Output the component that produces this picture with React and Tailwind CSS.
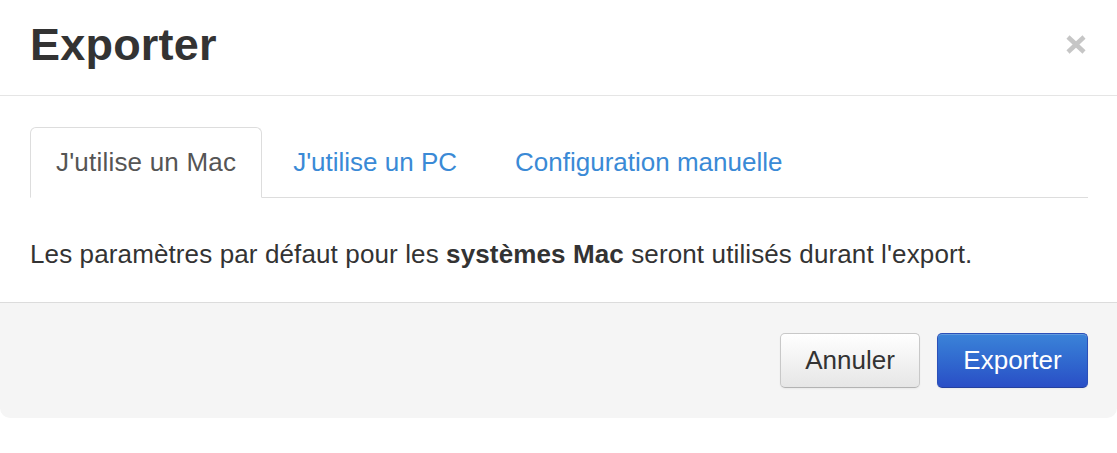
import React from "react";

export default function App() {
  return (
    <div className="w-[1117px] h-[453px] bg-white" style={{ fontFamily: '"Liberation Sans", Arial, sans-serif' }}>
      <div className="w-full rounded-[10px] bg-white">
        {/* Header */}
        <div className="h-[96px] border-b border-[#e5e5e5] pl-[30px] pr-[30px] flex items-start justify-between">
          <h3 className="pt-[22px] text-[45px] leading-[45px] font-bold text-[#333] tracking-[0.2px]">Exporter</h3>
          <button className="mt-[35px] mr-[1px]" aria-label="close">
            <svg width="20" height="19" viewBox="0 0 20 19">
              <line x1="2" y1="2" x2="18" y2="17" stroke="#c6c6c6" strokeWidth="4.5" />
              <line x1="18" y1="2" x2="2" y2="17" stroke="#c6c6c6" strokeWidth="4.5" />
            </svg>
          </button>
        </div>

        {/* Body */}
        <div className="pl-[30px] pr-[29px] pt-[31px] pb-[32px]">
          <ul className="flex border-b border-[#ddd]">
            <li className="-mb-px mr-[4px] h-[71px] flex items-center px-[25px] border border-[#ddd] border-b-white rounded-t-[6px] bg-white text-[26px] tracking-[0.2px] text-[#555]">
              J'utilise un Mac
            </li>
            <li className="-mb-px mr-[4px] h-[71px] flex items-center px-[26px] border border-transparent text-[26px] text-[#3a8ad6]">
              J'utilise un PC
            </li>
            <li className="-mb-px mr-[4px] h-[71px] flex items-center px-[26px] border border-transparent text-[26px] text-[#3a8ad6]">
              Configuration manuelle
            </li>
          </ul>
          <p className="mt-[40px] text-[26px] leading-[32px] tracking-[0.12px] text-[#333]">
            Les paramètres par défaut pour les <b className="font-bold">systèmes Mac</b> seront utilisés durant l'export.
          </p>
        </div>

        {/* Footer */}
        <div className="h-[116px] border-t border-[#dcdcdc] bg-[#f5f5f5] rounded-b-[10px] pr-[29px] flex items-start justify-end gap-[17px] pt-[30px]">
          <button className="h-[55px] w-[140px] rounded-[5px] border border-[#c8c8c8] border-b-[#b3b3b3] bg-gradient-to-b from-white to-[#e6e6e6] text-[26px] text-[#333] shadow-[inset_0_1px_0_rgba(255,255,255,0.2),0_1px_2px_rgba(0,0,0,0.05)]">
            Annuler
          </button>
          <button className="h-[55px] w-[151px] rounded-[5px] border border-[#2c50b8] border-b-[#24409e] bg-gradient-to-b from-[#3b83d8] to-[#2a4ec6] text-[26px] text-white shadow-[inset_0_1px_0_rgba(255,255,255,0.2),0_1px_2px_rgba(0,0,0,0.05)]">
            Exporter
          </button>
        </div>
      </div>
    </div>
  );
}
